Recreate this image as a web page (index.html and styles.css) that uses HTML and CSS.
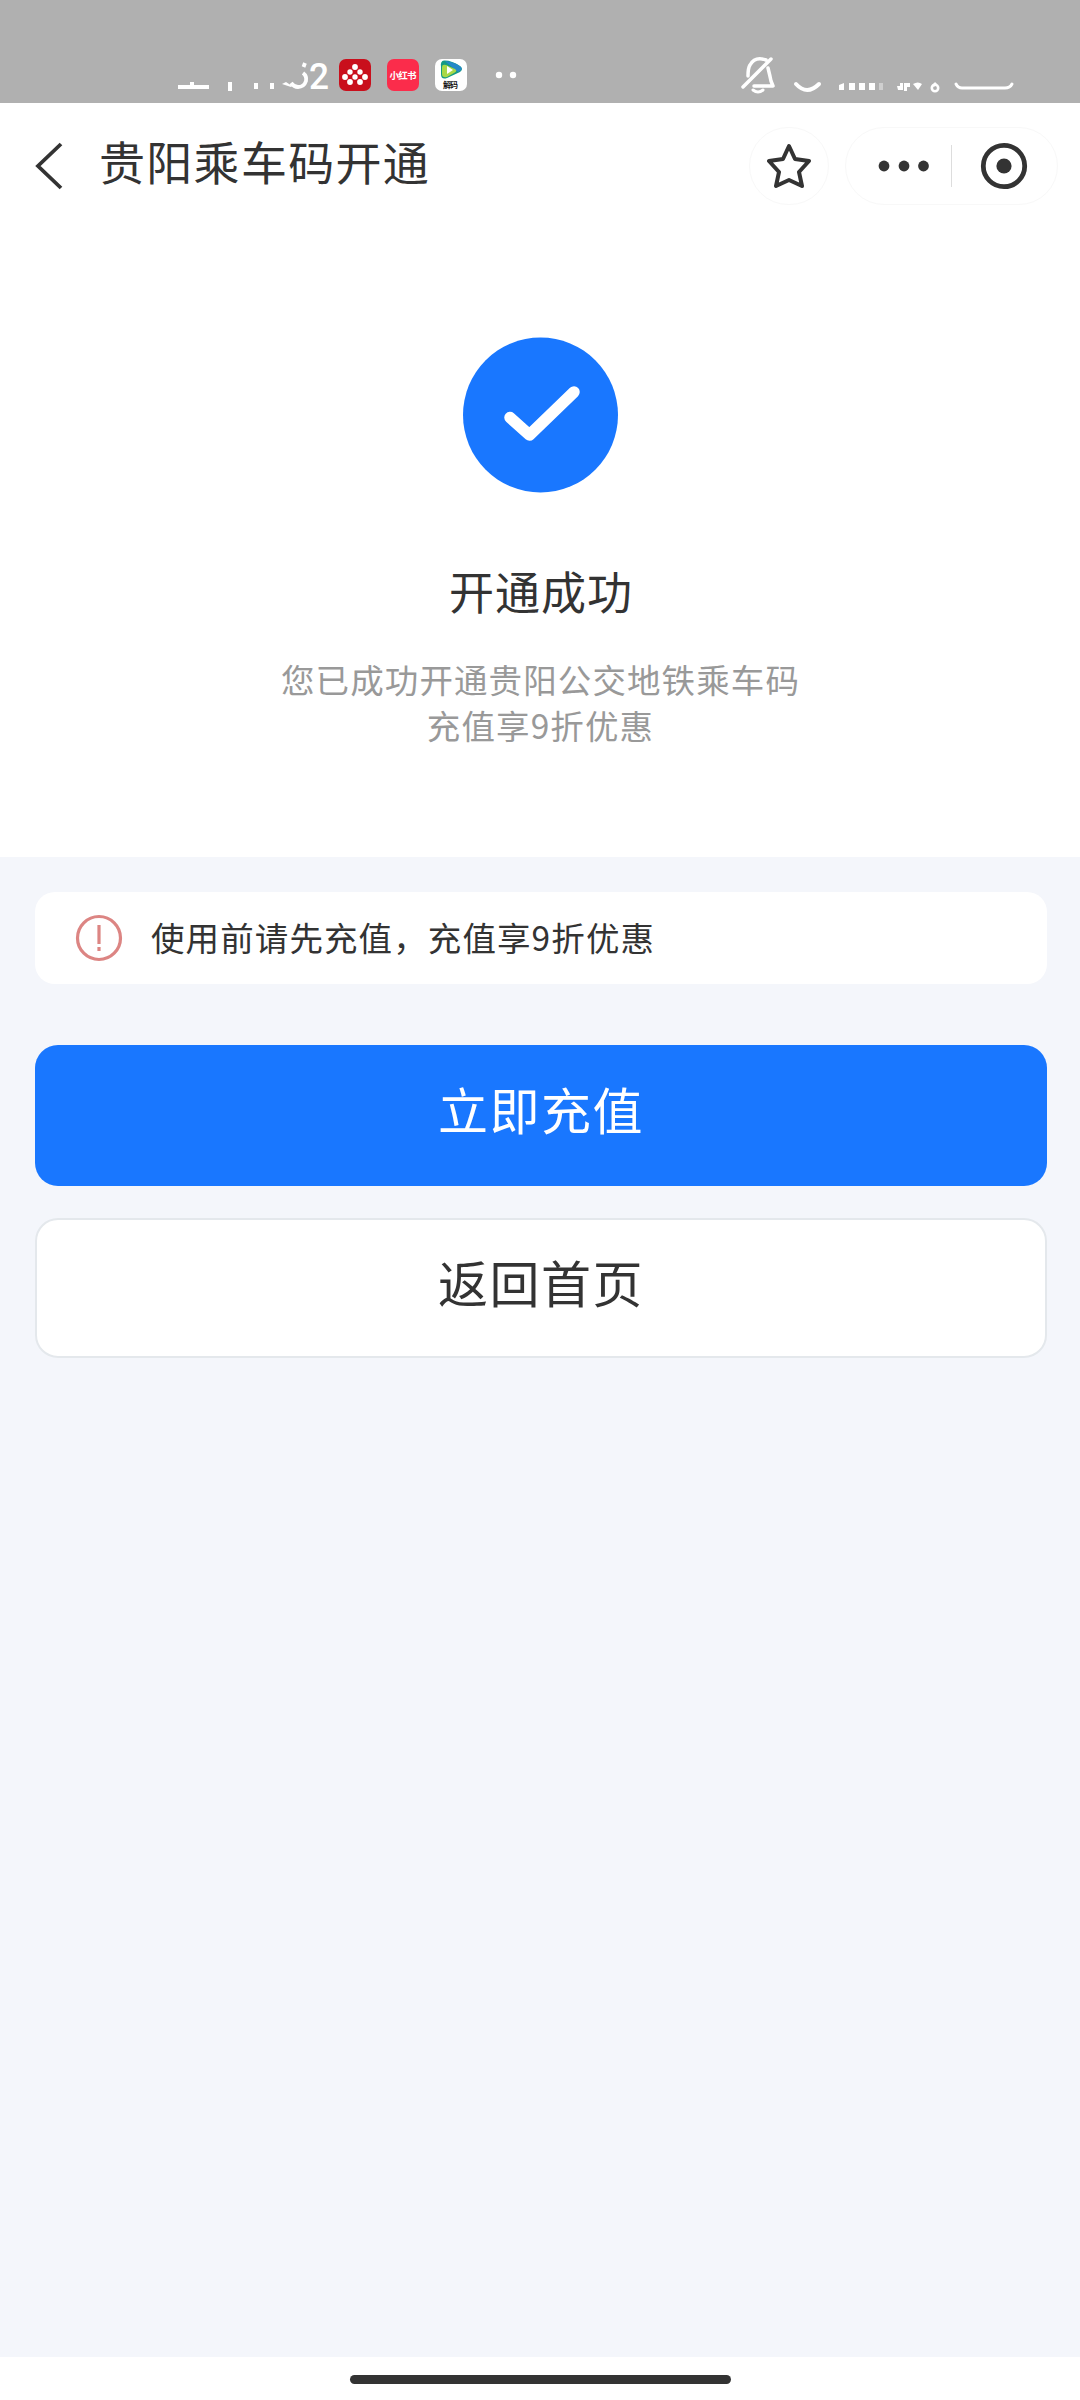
FILE: index.html
```html
<!DOCTYPE html>
<html lang="zh-CN">
<head>
<meta charset="utf-8">
<title>贵阳乘车码开通</title>
<link rel="stylesheet" href="styles.css">
</head>
<body>
<header class="status">
  <svg class="clock" width="154" height="44" viewBox="0 0 154 44">
    <g fill="#fff">
      <path d="M2 30h31v4H2zM14 27h4v3h-4zM52 27h4v9h-4zM78 28h4v6h-4zM94 28h4v6h-4zM106 29l4-2 6 4-1 1z"/>
      <text x="133" y="34" font-size="37" class="digit" textLength="20" lengthAdjust="spacingAndGlyphs">2</text>
    </g>
    <path d="M129 8l-1.500 4M127 18q4 3 3 8q-2 6-8 6q-4 0-7-4" fill="none" stroke="#fff" stroke-width="3.800"/>
  </svg>
  <div class="apps">
    <svg width="32" height="32" viewBox="0 0 32 32">
      <rect width="32" height="32" rx="7" fill="#c90f1c"/>
      <g fill="#fff"><circle cx="16" cy="8" r="2.9"/><circle cx="11" cy="13" r="2.7"/><circle cx="21" cy="13" r="2.7"/><circle cx="6" cy="18" r="2.9"/><circle cx="16" cy="18" r="2.7"/><circle cx="26" cy="18" r="2.9"/><circle cx="11" cy="23" r="2.9"/><circle cx="21" cy="23" r="2.9"/></g>
    </svg>
    <svg width="32" height="32" viewBox="0 0 32 32">
      <rect width="32" height="32" rx="7" fill="#fb2c4b"/>
      <text x="2.5" y="20" font-size="9.5" font-weight="700" fill="#fff" textLength="27">小红书</text>
    </svg>
    <svg width="32" height="32" viewBox="0 0 32 32">
      <rect width="32" height="32" rx="7" fill="#fff"/>
      <path d="M9 1.500Q5 2 6 8v7q0 6 6 4l13-6q4-3 0-6Q16 1 9 1.500z" fill="#149b83"/>
      <path d="M10 2q10 1 16 6 2 3-3 5L12 4z" fill="#2588c8"/>
      <path d="M7 8q0-3 4-2l9 4q3 2-1 4l-7 4q-5 1-5-3z" fill="#a8d848"/>
      <path d="M12 7l6 4-6 4z" fill="#fff"/>
      <text x="8" y="29" font-size="8" font-weight="700" fill="#111" textLength="15">解码</text>
    </svg>
  </div>
  <svg class="more" width="22" height="8" viewBox="0 0 22 8"><g fill="#fff"><circle cx="4" cy="4" r="3.2"/><circle cx="18" cy="4" r="3.2"/></g></svg>
  <svg class="indicators" width="280" height="44" viewBox="740 54 280 44">
    <g fill="none" stroke="#fff" stroke-width="3.5" stroke-linecap="round" stroke-linejoin="round">
      <path d="M743 87l28-28M766 60q-11-4-16 5-2 3-2 11M768 68q2 8 3 13l2 5h-19"/>
      <path d="M753 90q5 4 10 0" stroke-width="3"/>
      <path d="M796 84q11 12 23 0" stroke-width="4"/>
      <path d="M956 84q2 4 6 4h43q5 0 7-4" stroke-width="3"/>
    </g>
    <g fill="#fff">
      <path d="M839 90v-5l5-2v7zM849 83h6v7h-6zM859 83h6v7h-6zM869 83h6v7h-6z"/>
      <path d="M879 83h4v7h-4z" opacity=".4"/>
      <path d="M897 86h3v-3h3v7h-5zM904 83h6v4h-3v4h-3z"/>
      <path d="M913 84q5-3 9 0l-4 6z"/>
    </g>
    <circle cx="935" cy="88" r="3.2" fill="none" stroke="#fff" stroke-width="2.6"/><path d="M933 86l3-3" stroke="#fff" stroke-width="2.6"/>
  </svg>
</header>

<nav class="nav">
  <svg class="back" width="30" height="48" viewBox="0 0 30 48"><path d="M27 2L4 24l23 22" fill="none" stroke="#333" stroke-width="3.8"/></svg>
  <h1 class="title">贵阳乘车码开通</h1>
  <div class="favorite">
    <svg width="44" height="48" viewBox="0 0 44 48"><path d="M22 4l6 13 14 2-10 11 3 14-13-6-13 6 3-14L2 19l14-2z" fill="none" stroke="#333" stroke-width="4" stroke-linejoin="round"/></svg>
  </div>
  <div class="capsule">
    <svg class="dots" width="52" height="12" viewBox="0 0 52 12"><g fill="#333"><circle cx="6" cy="6" r="5.4"/><circle cx="26" cy="6" r="5.4"/><circle cx="45.5" cy="6" r="5.4"/></g></svg>
    <span class="divider"></span>
    <svg width="48" height="48" viewBox="0 0 48 48"><circle cx="24" cy="24" r="20.7" fill="none" stroke="#333" stroke-width="4.8"/><circle cx="24" cy="24" r="7.6" fill="#333"/></svg>
  </div>
</nav>

<section class="result">
  <svg width="156" height="156" viewBox="0 0 156 156"><circle cx="78.500" cy="78" r="77.500" fill="#1977ff"/><path d="M48 80.500l19.500 17.500L112 55" fill="none" stroke="#fff" stroke-width="11.500" stroke-linecap="round" stroke-linejoin="round"/></svg>
  <h2 class="result-title">开通成功</h2>
  <p class="result-text">您已成功开通贵阳公交地铁乘车码<br>充值享9折优惠</p>
</section>

<main class="content">
  <div class="notice">
    <svg width="48" height="48" viewBox="0 0 48 48"><circle cx="24" cy="24" r="21.500" fill="none" stroke="#dc8583" stroke-width="3.200"/><path d="M24 11v19M24 33v4" stroke="#dc8583" stroke-width="3.200"/></svg>
    <span class="notice-text">使用前请先充值，充值享9折优惠</span>
  </div>
  <button class="button primary">立即充值</button>
  <button class="button secondary">返回首页</button>
</main>
<footer class="home"><span class="home-bar"></span></footer>
</body>
</html>
```
FILE: styles.css
```css
* { box-sizing: border-box; }
body {
  margin: 0;
  height: 2400px;
  display: flex;
  flex-direction: column;
  background: #fff;
  color: #333;
  font-family: "Noto Sans CJK SC", sans-serif;
}
svg { display: block; flex: none; }
h1, h2, p { margin: 0; font-weight: 400; }

.status {
  height: 103px;
  flex: none;
  display: flex;
  align-items: flex-start;
  padding: 55px 60px 0 176px;
  background: #b0b0b0;
}
.digit { font-family: Roboto, sans-serif; font-weight: 500; }
.apps { display: flex; gap: 16px; margin: 4px 0 0 9px; }
.more { margin: 16px 0 0 28px; }
.indicators { margin: -1px 0 0 auto; }

.nav {
  height: 125px;
  flex: none;
  display: flex;
  align-items: center;
  padding: 0 22px 0 34px;
}
.title { margin: -11px auto 0 35px; font-size: 46px; line-height: 60px; letter-spacing: 1.3px; }
.favorite, .capsule {
  height: 78px;
  display: flex;
  align-items: center;
  border: 1px solid #f8f8f8;
  border-radius: 39px;
}
.favorite { width: 80px; justify-content: center; margin-right: 16px; }
.capsule { width: 213px; padding-left: 32px; }
.divider { width: 1px; height: 42px; margin: 0 28px 0 21px; background: #ddd; }

.result {
  height: 629px;
  flex: none;
  display: flex;
  flex-direction: column;
  align-items: center;
  padding-top: 109px;
}
.result-title { margin-top: 63px; padding-left: 2px; font-size: 45px; line-height: 70px; letter-spacing: 1px; }
.result-text {
  margin-top: 30px;
  padding-left: 1px;
  font-size: 33.500px;
  line-height: 46px;
  letter-spacing: 1.100px;
  text-align: center;
  color: #999;
}

.content {
  flex: 1;
  display: flex;
  flex-direction: column;
  padding: 35px 33px 0 35px;
  background: #f4f6fb;
}
.notice {
  height: 92px;
  display: flex;
  align-items: center;
  gap: 28px;
  padding-left: 40px;
  border-radius: 20px;
  background: #fff;
  font-size: 33.500px;
  line-height: 46px;
  letter-spacing: 1.100px;
}
.notice-text { padding-bottom: 3px; }
.button {
  display: block;
  width: 100%;
  padding: 0 0 15px;
  border: 0;
  border-radius: 23px;
  font: 400 50px/70px "Noto Sans CJK SC", sans-serif;
  letter-spacing: 1.500px;
}
.primary { height: 141px; margin-top: 61px; background: #1977ff; color: #fff; }
.secondary { height: 140px; margin-top: 32px; border: 2px solid #e4e8ec; background: #fff; color: #333; }

.home { height: 43px; flex: none; display: flex; justify-content: center; padding-top: 18px; }
.home-bar { width: 381px; height: 9px; border-radius: 5px; background: #333; }
```
